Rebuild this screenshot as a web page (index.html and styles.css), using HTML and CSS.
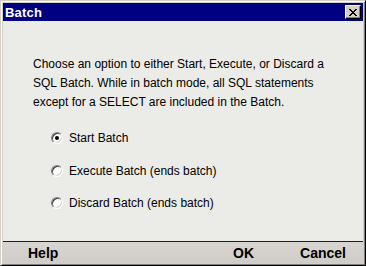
FILE: index.html
```html
<!DOCTYPE html>
<html>
<head>
<meta charset="utf-8">
<link rel="stylesheet" href="styles.css">
</head>
<body>
<div class="window">
  <div class="titlebar">
    <span class="title">Batch</span>
    <span class="close">
      <svg width="8" height="7" viewBox="0 0 8 7"><path d="M0 0h2v1h1v1h2V1h1V0h2v1h-1v1h-1v1h-1v1h1v1h1v1h1v1H6V6H5V5H3v1H2v1H0V6h1V5h1V4h1V3H2V2H1V1H0z" fill="#000"/></svg>
    </span>
  </div>
  <div class="content">
    <p class="desc">Choose an option to either Start, Execute, or Discard a SQL Batch. While in batch mode, all SQL statements except for a SELECT are included in the Batch.</p>
    <div class="options">
      <div class="option"><span class="radio checked"></span><span>Start Batch</span></div>
      <div class="option"><span class="radio"></span><span>Execute Batch (ends batch)</span></div>
      <div class="option"><span class="radio"></span><span>Discard Batch (ends batch)</span></div>
    </div>
  </div>
  <div class="footer">
    <span class="btn help">Help</span>
    <span class="btn ok">OK</span>
    <span class="btn cancel">Cancel</span>
  </div>
</div>
</body>
</html>
```
FILE: styles.css
```css
html, body { margin: 0; padding: 0; }
body { width: 366px; height: 266px; overflow: hidden; font-family: "Liberation Sans", Arial, sans-serif; }
.window {
  box-sizing: border-box;
  width: 366px; height: 266px;
  background: #d4d0c8;
  border-top: 1px solid #d4d0c8; border-left: 1px solid #d4d0c8;
  border-right: 1px solid #000; border-bottom: 1px solid #000;
  box-shadow: inset 1px 1px 0 #fff, inset -1px -1px 0 #808080;
  padding: 2px;
  display: flex; flex-direction: column;
}
.titlebar {
  height: 18px; background: #000080;
  display: flex; align-items: center; justify-content: space-between;
  padding: 0 2px 0 2px;
}
.title { color: #fff; font-weight: bold; font-size: 13px; letter-spacing: 0.2px; }
.close {
  box-sizing: border-box; width: 16px; height: 14px;
  background: #d4d0c8;
  border-top: 1px solid #fff; border-left: 1px solid #fff;
  border-right: 1px solid #000; border-bottom: 1px solid #000;
  box-shadow: inset -1px -1px 0 #808080;
  display: flex; align-items: center; justify-content: center;
  padding-right: 1px;
}
.close svg { display: block; }
.content {
  flex: 1; background: #ebebe7;
  padding: 34px 0 0 30px;
  font-size: 12px; color: #000;
}
.desc { margin: 0; width: 310px; line-height: 19px; }
.options { display: flex; flex-direction: column; gap: 16.5px; margin: 18px 0 0 18px; }
.option { display: flex; align-items: center; gap: 6px; height: 16px; }
.radio {
  box-sizing: border-box; width: 12px; height: 12px; border-radius: 50%;
  background: #fff;
  border-top: 1px solid #808080; border-left: 1px solid #808080;
  border-right: 1px solid #fff; border-bottom: 1px solid #fff;
  box-shadow: inset 1px 1px 0 #404040, inset -1px -1px 0 #d4d0c8;
  position: relative;
}
.radio.checked::after {
  content: ""; position: absolute; left: 3px; top: 3px;
  width: 4px; height: 4px; border-radius: 50%; background: #000;
}
.footer {
  height: 21px;
  border-top: 1px solid #202020;
  background: linear-gradient(#d8d5d0, #d0cdc8);
  display: flex; align-items: center;
  font-weight: bold; font-size: 14px; color: #000;
}
.btn { display: block; }
.help { margin-left: 25px; }
.ok { margin-left: auto; }
.cancel { margin-left: 46px; margin-right: 17px; }
```
